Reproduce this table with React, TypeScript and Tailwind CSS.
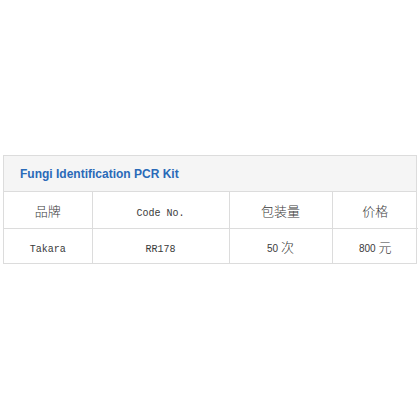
export default function App() {
  const cols = [
    { label: '品牌', value: 'Takara', w: 'w-[88px]', mono: true },
    { label: 'Code No.', value: 'RR178', w: 'w-[137px]', mono: true },
    { label: '包装量', value: '50 次', w: 'w-[103px]', mono: false },
    { label: '价格', value: '800 元', w: 'w-[86px]', mono: false },
  ];

  return (
    <div className="w-[420px] h-[420px] bg-white pt-[155px] pl-[3px]">
      <div className="w-[414px] border border-[#dcdcdc]">
        {/* Title bar */}
        <div className="h-[36px] flex items-center pl-[16px] bg-[#f5f5f5] border-b border-[#dcdcdc]">
          <span className="text-[12px] font-bold text-[#2a6ab8] font-['Liberation_Sans',Arial,sans-serif]">
            Fungi Identification PCR Kit
          </span>
        </div>

        <table className="w-full border-collapse table-fixed text-[#3a3a3a]">
          <tbody>
            <tr className="h-[36px]">
              {cols.map((c, i) => (
                <td
                  key={c.label}
                  className={`${c.w} text-center align-middle border-b border-[#dcdcdc] ${i > 0 ? 'border-l' : ''}`}
                >
                  {c.label === 'Code No.' ? (
                    <span className="font-['Liberation_Mono',monospace] text-[10px]">{c.label}</span>
                  ) : (
                    <span className="font-['Noto_Sans_CJK_SC',sans-serif] font-light text-[13px]">{c.label}</span>
                  )}
                </td>
              ))}
            </tr>
            <tr className="h-[35px]">
              {cols.map((c, i) => (
                <td
                  key={c.value}
                  className={`text-center align-middle border-[#dcdcdc] ${i > 0 ? 'border-l' : ''}`}
                >
                  {c.mono ? (
                    <span className="font-['Liberation_Mono',monospace] text-[10px]">{c.value}</span>
                  ) : (
                    <span className="font-['Liberation_Sans',sans-serif] text-[10px]">
                      {c.value.split(' ')[0]}{' '}
                      <span className="font-['Noto_Sans_CJK_SC',sans-serif] font-light text-[13px]">
                        {c.value.split(' ')[1]}
                      </span>
                    </span>
                  )}
                </td>
              ))}
            </tr>
          </tbody>
        </table>
      </div>
    </div>
  );
}
